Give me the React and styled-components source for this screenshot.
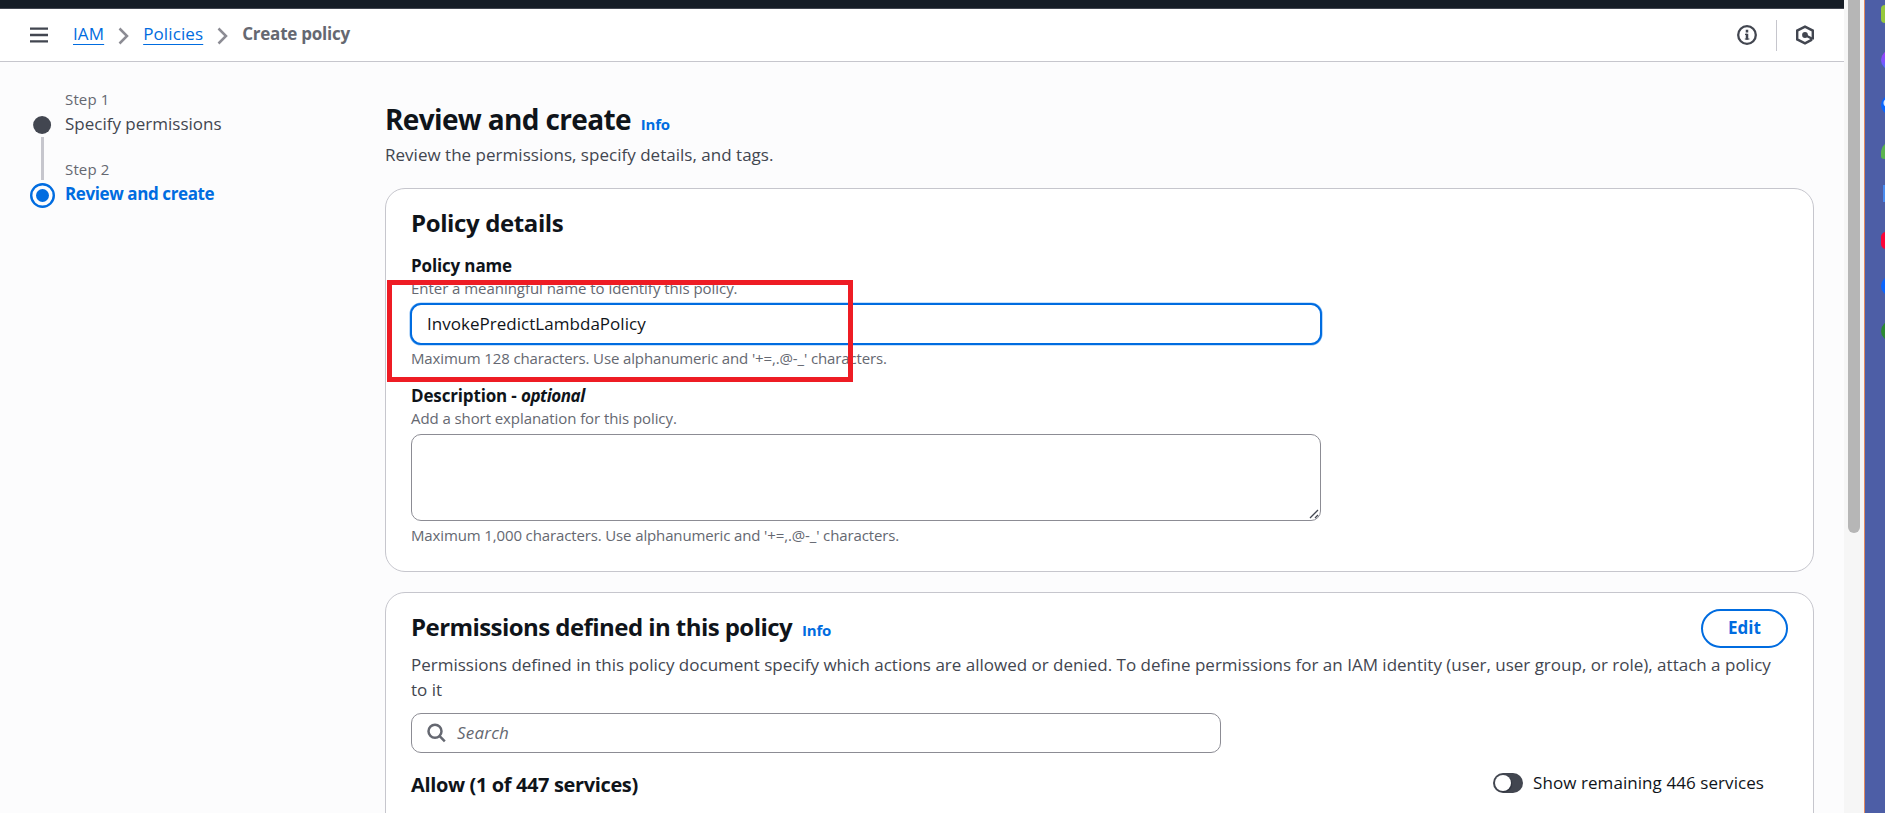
import React from 'react';
import styled, { createGlobalStyle } from 'styled-components';

const GlobalStyle = createGlobalStyle`
  *, *::before, *::after { box-sizing: border-box; }
  body { margin: 0; overflow: hidden; }
  h1, h2, h3, p, ol, ul { margin: 0; padding: 0; }
`;

const color = {
  page: '#fcfcfd',
  link: '#006ce0',
  heading: '#0f141a',
  body: '#424650',
  hint: '#656871',
  line: '#c6c6cd',
  field: '#8c8c94',
};

const Screen = styled.div`
  display: flex;
  width: 100%;
  height: 813px;
  overflow: hidden;
  font-family: 'Open Sans', 'Noto Sans', sans-serif;
  font-size: 17px;
  line-height: 25px;
  color: ${color.heading};
`;

const Browser = styled.div`
  display: flex;
  flex-direction: column;
  flex: 1;
  min-width: 0;
  background: ${color.page};
`;

const TopNav = styled.div`
  flex: none;
  height: 9px;
  background: #161d26;
  border-bottom: 1px solid #424650;
`;

const Toolbar = styled.header`
  flex: none;
  display: flex;
  align-items: center;
  height: 53px;
  padding: 0 29px 0 30px;
  background: #fff;
  border-bottom: 1px solid ${color.line};
`;

const Breadcrumbs = styled.nav`
  display: flex;
  align-items: center;
  gap: 14px;
  margin-left: 25px;
  padding-bottom: 3px;
`;

const Crumb = styled.a`
  color: ${color.link};
  letter-spacing: 0.12px;
  text-decoration: underline;
  text-decoration-thickness: 1px;
  text-underline-offset: 4px;
`;

const CurrentCrumb = styled.span`
  font-weight: 700;
  letter-spacing: -0.24px;
  color: ${color.hint};
`;

const Chevron = styled.svg`
  position: relative;
  top: 2px;
`;

const Tools = styled.div`
  display: flex;
  align-items: center;
  margin-left: auto;
`;

const ToolDivider = styled.span`
  width: 1px;
  height: 31px;
  margin: 0 18px 0 19px;
  background: ${color.line};
`;

const Columns = styled.div`
  display: flex;
  flex: 1;
  min-height: 0;
`;

const Steps = styled.ol`
  flex: none;
  width: 385px;
  padding: 28px 0 0 30px;
  list-style: none;
`;

const Step = styled.li`
  display: flex;
  height: 70px;
`;

const Track = styled.div`
  display: flex;
  flex-direction: column;
  align-items: center;
  flex: none;
  width: 25px;
  margin-right: 10px;
  padding-top: ${(p) => (p.$current ? 23 : 26)}px;

  svg { flex: none; }
`;

const Connector = styled.span`
  flex: none;
  width: 3px;
  height: 43px;
  margin-top: 3px;
  background: ${color.line};
`;

const StepNumber = styled.div`
  margin-top: -1px;
  font-size: 15px;
  line-height: 20px;
  letter-spacing: 0.15px;
  color: ${color.hint};
`;

const StepLabel = styled.div`
  margin-top: 2px;
  font-weight: ${(p) => (p.$current ? 700 : 400)};
  letter-spacing: ${(p) => (p.$current ? -0.4 : 0)}px;
  color: ${(p) => (p.$current ? color.link : color.body)};
`;

const Main = styled.main`
  flex: 1;
  min-width: 0;
  padding: 39px 30px 0 0;
`;

const PageTitle = styled.h1`
  font-size: 28px;
  line-height: 36px;
  font-weight: 700;
  letter-spacing: -0.65px;
`;

const InfoLink = styled.a`
  margin-left: ${(p) => p.$gap}px;
  font-size: 15px;
  line-height: 1;
  font-weight: 700;
  letter-spacing: -0.2px;
  color: ${color.link};
`;

const Lead = styled.p`
  margin-top: 5px;
  letter-spacing: 0.02px;
  color: ${color.body};
`;

const Card = styled.section`
  height: ${(p) => p.$height}px;
  margin-top: ${(p) => p.$gap}px;
  padding: ${(p) => p.$top}px 25px 0;
  background: #fff;
  border: 1px solid ${color.line};
  border-radius: 20px;
`;

const CardTitle = styled.h2`
  font-size: 24px;
  line-height: 30px;
  font-weight: 700;
  letter-spacing: ${(p) => p.$tracking}px;
`;

const Field = styled.div`
  width: 910px;
  margin-top: 15px;
`;

const Label = styled.label`
  display: block;
  font-weight: 700;
  letter-spacing: -0.15px;

  i { letter-spacing: -0.45px; }
`;

const Hint = styled.p`
  font-size: 15px;
  line-height: 20px;
  letter-spacing: ${(p) => p.$tracking || -0.04}px;
  margin-top: ${(p) => p.$gap || 0}px;
  color: ${color.hint};
`;

const TextInput = styled.input`
  display: block;
  width: 912px;
  height: 42px;
  margin: 5px -1px 0;
  padding: 0 15px 1px;
  font: inherit;
  letter-spacing: 0.03px;
  color: ${color.heading};
  background: #fff;
  border: 2px solid ${color.link};
  border-radius: 11px;
  box-shadow: 0 0 0 0.6px #8fc1f5;
  outline: none;
`;

const TextAreaWrap = styled.div`
  position: relative;
  margin-top: 6px;
`;

const TextArea = styled.textarea`
  display: block;
  width: 910px;
  height: 87px;
  background: #fff;
  border: 1px solid ${color.field};
  border-radius: 10px;
  resize: none;
  outline: none;
`;

const ResizeGrip = styled.svg`
  position: absolute;
  right: 2px;
  bottom: 2px;
`;

const CardHeader = styled.div`
  display: flex;
  align-items: flex-start;
  justify-content: space-between;
  height: 43px;

  h2 { padding-top: 3px; }
`;

const EditButton = styled.button`
  width: 87px;
  height: 39px;
  padding: 0 0 2px;
  font: inherit;
  font-weight: 700;
  color: ${color.link};
  background: #fff;
  border: 2px solid ${color.link};
  border-radius: 20px;
`;

const Description = styled.p`
  color: ${color.body};
`;

const SearchBox = styled.div`
  display: flex;
  align-items: center;
  gap: 11px;
  width: 810px;
  height: 40px;
  margin-top: 11px;
  padding: 0 15px;
  color: ${color.hint};
  border: 1px solid ${color.field};
  border-radius: 10px;
  font-style: italic;
`;

const SearchText = styled.span`
  padding-bottom: 2px;
  letter-spacing: 0.2px;
`;

const AllowRow = styled.div`
  display: flex;
  align-items: flex-start;
  justify-content: space-between;
  margin-top: 17px;
  padding-right: 24px;
`;

const AllowTitle = styled.h3`
  padding-top: 2px;
  font-size: 20px;
  font-weight: 700;
  letter-spacing: -0.37px;
`;

const ToggleLabel = styled.label`
  display: flex;
  align-items: center;
  gap: 10px;
  letter-spacing: 0.07px;
`;

const Toggle = styled.span`
  display: flex;
  align-items: center;
  width: 30px;
  height: 20px;
  margin-top: 1px;
  padding-left: 2px;
  background: ${color.body};
  border-radius: 10px;

  &::before {
    content: '';
    width: 16px;
    height: 16px;
    background: #fff;
    border-radius: 50%;
    box-shadow: 1px 1px 1px rgba(0, 7, 22, 0.3);
  }
`;

const Highlight = styled.div`
  position: absolute;
  left: 387px;
  top: 280px;
  width: 466px;
  height: 102px;
  border: 5px solid #ee1c24;
`;

const Scrollbar = styled.div`
  flex: none;
  width: 20px;
  padding-left: 4px;
  background: #f6f6f6;
`;

const Thumb = styled.div`
  width: 12px;
  height: 533px;
  background: #b6b6b6;
  border-radius: 0 0 6px 6px;
`;

const Dock = styled.aside`
  flex: none;
  width: 21px;
  padding: 5px 0 0 16px;
  background: #4d5ea6;
  border-left: 1px solid #e08a62;
  overflow: hidden;
`;

const DockApp = styled.div`
  width: 20px;
  height: ${(p) => p.$h}px;
  margin: 0 0 ${(p) => p.$after}px ${(p) => p.$inset || 0}px;
  background: ${(p) => p.$fill};
  border-radius: ${(p) => p.$radius};
`;

const dockApps = [
  { h: 18, after: 27, fill: '#96c93d', radius: '4px' },
  { h: 20, after: 25, fill: 'linear-gradient(#a63cf5, #7a55ff 60%, #3b7cff)', radius: '50%' },
  { h: 20, after: 26, fill: 'radial-gradient(circle at 7px 8px, #dbe9ff 4px, #0866ff 5px)', radius: '50%' },
  { h: 18, after: 26, fill: '#5bb450', radius: '12px 4px 4px 3px' },
  { h: 17, after: 30, fill: '#4a8cf0', radius: '0', inset: 2 },
  { h: 17, after: 27, fill: '#fb0438', radius: '5px' },
  { h: 20, after: 25, fill: '#0a66ff', radius: '50%' },
  { h: 20, after: 0, fill: '#2c8a33', radius: '50%' },
];

const MenuIcon = () => (
  <svg width="18" height="18" viewBox="0 0 18 18" stroke={color.body} strokeWidth="2.3">
    <path d="M0 2.6h18M0 9h18M0 15.4h18" />
  </svg>
);

const ChevronIcon = () => (
  <Chevron width="11" height="18" viewBox="0 0 11 18" fill="none" stroke={color.field} strokeWidth="2.5">
    <path d="M1.5 1.5 9 9l-7.5 7.5" />
  </Chevron>
);

const InfoIcon = () => (
  <svg width="20" height="20" viewBox="0 0 20 20" fill="none" stroke={color.body}>
    <circle cx="10" cy="10" r="8.8" strokeWidth="2.3" />
    <path d="M10 4.8v2.6M10 8.8v6" strokeWidth="2.5" />
    <path d="M8 9.4h2M7.8 14h4.6" strokeWidth="1.2" />
  </svg>
);

const HexagonIcon = () => (
  <svg width="20" height="20" viewBox="0 0 20 20" fill="none" stroke={color.body} strokeWidth="2.4">
    <path d="M17.8 14.6V5.6L10 1.6 2.2 5.6v8.8L10 18.4l7-3.8" />
    <path d="M10 10l7.6 4" />
    <circle cx="10" cy="10" r="2.9" fill={color.body} stroke="none" />
  </svg>
);

const SearchIcon = () => (
  <svg width="19" height="20" viewBox="0 0 19 20" fill="none" stroke={color.hint} strokeWidth="2.5">
    <circle cx="8" cy="8.2" r="6.5" />
    <path d="M12.4 12.9l5.4 5.4" />
  </svg>
);

const DoneMarker = () => (
  <svg width="19" height="18">
    <circle cx="9.1" cy="9" r="9" fill={color.body} />
  </svg>
);

const CurrentMarker = () => (
  <svg width="25" height="25" fill="none">
    <circle cx="12.5" cy="12.5" r="11.3" stroke={color.link} strokeWidth="2.4" />
    <circle cx="12.5" cy="12.5" r="6.5" fill={color.link} />
  </svg>
);

export default function App() {
  return (
    <>
      <GlobalStyle />
      <Screen>
        <Browser>
          <TopNav />
          <Toolbar>
            <MenuIcon />
            <Breadcrumbs>
              <Crumb>IAM</Crumb>
              <ChevronIcon />
              <Crumb>Policies</Crumb>
              <ChevronIcon />
              <CurrentCrumb>Create policy</CurrentCrumb>
            </Breadcrumbs>
            <Tools>
              <InfoIcon />
              <ToolDivider />
              <HexagonIcon />
            </Tools>
          </Toolbar>
          <Columns>
            <Steps>
              <Step>
                <Track>
                  <DoneMarker />
                  <Connector />
                </Track>
                <div>
                  <StepNumber>Step 1</StepNumber>
                  <StepLabel>Specify permissions</StepLabel>
                </div>
              </Step>
              <Step>
                <Track $current>
                  <CurrentMarker />
                </Track>
                <div>
                  <StepNumber>Step 2</StepNumber>
                  <StepLabel $current>Review and create</StepLabel>
                </div>
              </Step>
            </Steps>
            <Main>
              <PageTitle>
                Review and create<InfoLink $gap={10}>Info</InfoLink>
              </PageTitle>
              <Lead>Review the permissions, specify details, and tags.</Lead>
              <Card $height={384} $gap={21} $top={19}>
                <CardTitle $tracking={-0.38}>Policy details</CardTitle>
                <Field>
                  <Label>Policy name</Label>
                  <Hint>Enter a meaningful name to identify this policy.</Hint>
                  <TextInput readOnly value="InvokePredictLambdaPolicy" />
                  <Hint $gap={3} $tracking={-0.13}>
                    Maximum 128 characters. Use alphanumeric and '+=,.@-_' characters.
                  </Hint>
                </Field>
                <Field>
                  <Label>
                    Description - <i>optional</i>
                  </Label>
                  <Hint $tracking={-0.08}>Add a short explanation for this policy.</Hint>
                  <TextAreaWrap>
                    <TextArea readOnly />
                    <ResizeGrip width="10" height="10" stroke="#424650" strokeWidth="1.3">
                      <path d="M1 9l8-8M6 9l3-3" />
                    </ResizeGrip>
                  </TextAreaWrap>
                  <Hint $gap={4} $tracking={-0.13}>
                    Maximum 1,000 characters. Use alphanumeric and '+=,.@-_' characters.
                  </Hint>
                </Field>
              </Card>
              <Card $height={260} $gap={20} $top={16}>
                <CardHeader>
                  <CardTitle $tracking={-0.56}>
                    Permissions defined in this policy<InfoLink $gap={10}>Info</InfoLink>
                  </CardTitle>
                  <EditButton>Edit</EditButton>
                </CardHeader>
                <Description>
                  Permissions defined in this policy document specify which actions are allowed or denied. To define
                  permissions for an IAM identity (user, user group, or role), attach a policy to it
                </Description>
                <SearchBox>
                  <SearchIcon />
                  <SearchText>Search</SearchText>
                </SearchBox>
                <AllowRow>
                  <AllowTitle>Allow (1 of 447 services)</AllowTitle>
                  <ToggleLabel>
                    <Toggle />
                    Show remaining 446 services
                  </ToggleLabel>
                </AllowRow>
              </Card>
            </Main>
          </Columns>
        </Browser>
        <Scrollbar>
          <Thumb />
        </Scrollbar>
        <Dock>
          {dockApps.map((app, i) => (
            <DockApp key={i} $h={app.h} $after={app.after} $fill={app.fill} $radius={app.radius} $inset={app.inset} />
          ))}
        </Dock>
        <Highlight />
      </Screen>
    </>
  );
}
